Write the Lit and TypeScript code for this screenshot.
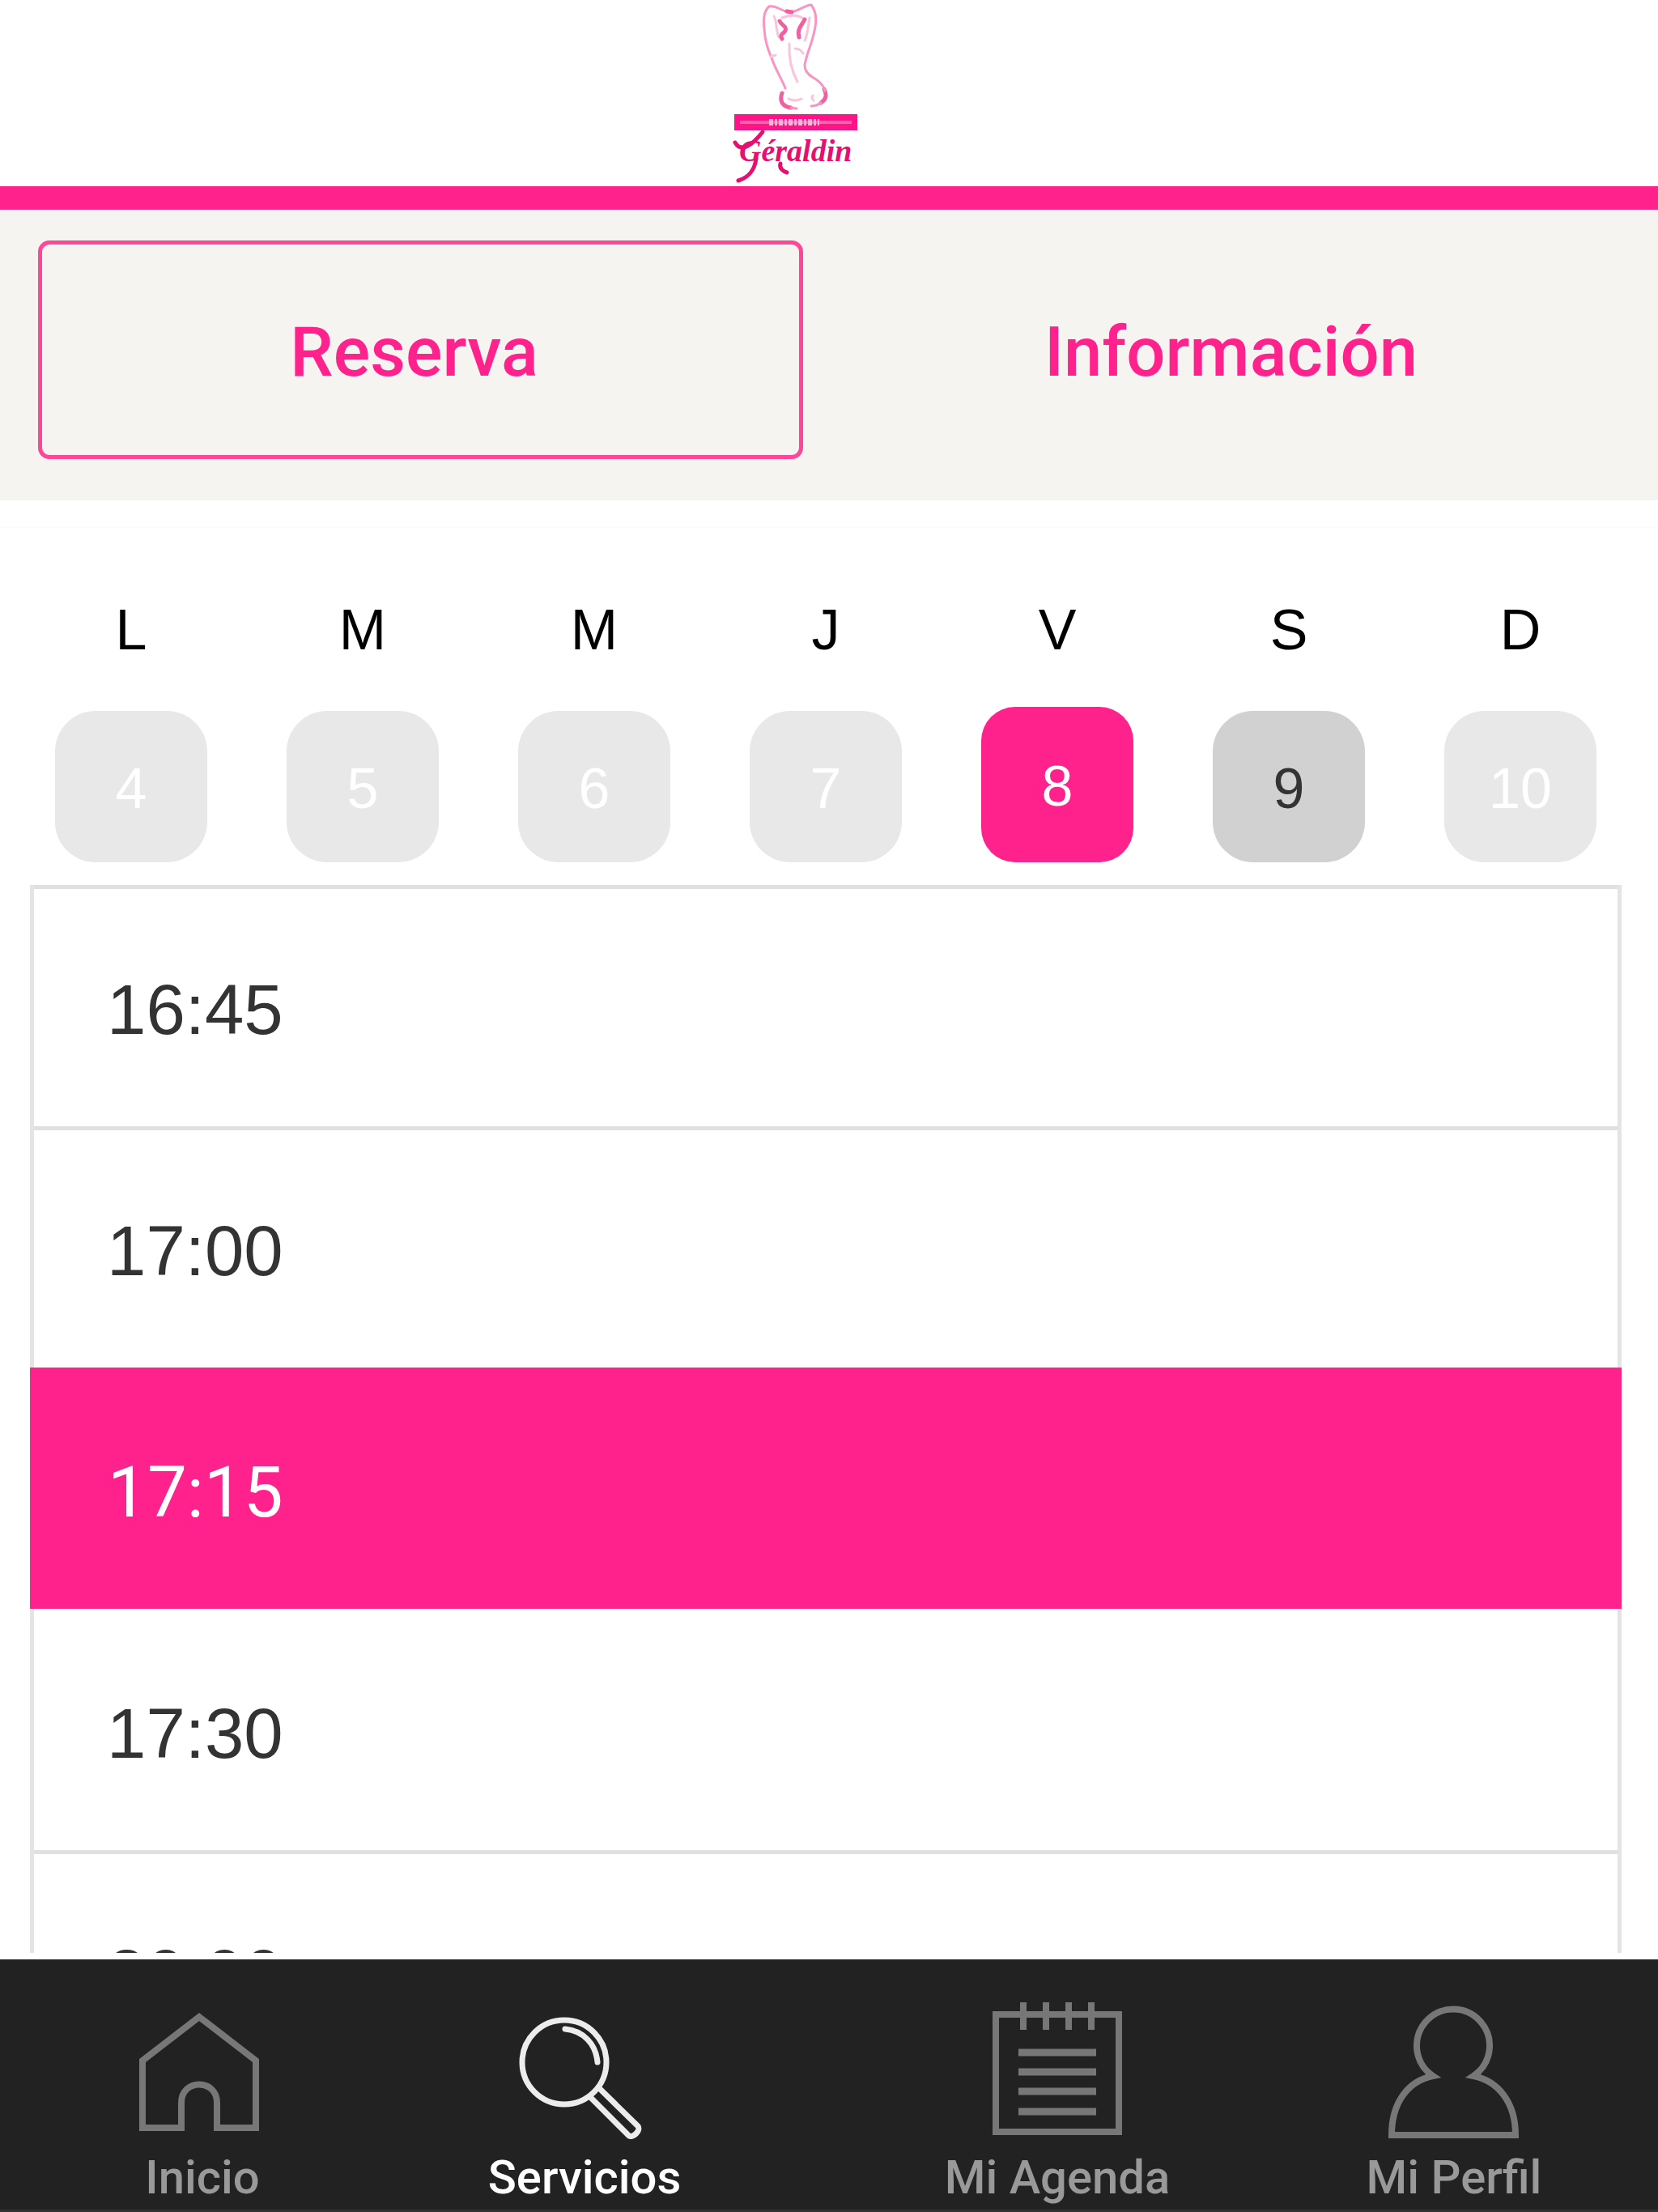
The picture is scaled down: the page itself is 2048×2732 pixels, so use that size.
import { LitElement, html, css, svg } from "lit";
import { customElement, state } from "lit/decorators.js";
import { classMap } from "lit/directives/class-map.js";

interface Day {
  letter: string;
  name: string;
  date: number;
  open: boolean;
}

const DAYS: Day[] = [
  { letter: "L", name: "Lunes", date: 4, open: false },
  { letter: "M", name: "Martes", date: 5, open: false },
  { letter: "M", name: "Miércoles", date: 6, open: false },
  { letter: "J", name: "Jueves", date: 7, open: false },
  { letter: "V", name: "Viernes", date: 8, open: true },
  { letter: "S", name: "Sábado", date: 9, open: true },
  { letter: "D", name: "Domingo", date: 10, open: false },
];

const TIMES = ["16:45", "17:00", "17:15", "17:30", "20:00"];

@customElement("brand-logo")
export class BrandLogo extends LitElement {
  static styles = css`
    :host {
      display: block;
    }
    .logo {
      display: block;
      width: 160px;
      height: 230px;
    }
    .line {
      fill: none;
      stroke: #f995c1;
      stroke-width: 3;
      stroke-linecap: round;
      stroke-linejoin: round;
    }
    .soft {
      stroke: #fcc4dc;
    }
    .strong {
      stroke: #f0609f;
      stroke-width: 5;
    }
    .script {
      font: italic 700 38px "Liberation Serif", serif;
      fill: #e5106f;
    }
    .flourish {
      fill: none;
      stroke: #e5106f;
      stroke-width: 5;
      stroke-linecap: round;
    }
  `;

  render() {
    return html`
      <svg class="logo" viewBox="0 0 160 230" role="img" aria-label="Géraldin">
        <path class="line" d="M50 8C43 14 43 24 44 36C45 52 49 62 54 74C58 86 66 98 70 109" />
        <path class="line" d="M50 8C58 6 64 13 74 15C84 16 94 6 102 6C108 14 109 26 106 38C103 54 97 64 94 80C94 86 97 91 102 94" />
        <path class="line soft" d="M56 20C60 26 58 38 62 46M100 22C98 32 98 42 94 50M66 22C76 18 86 18 94 24M75 54C74 72 78 88 85 101M82 60C88 60 90 63 92 66M52 70L58 68" />
        <path class="line strong" d="M63 26C66 32 72 32 70 38C68 42 62 42 66 48M94 24C90 32 84 36 87 46M72 14L78 15" />
        <path class="line strong" d="M66 115C62 126 68 132 77 133M118 110C122 118 120 123 114 127" />
        <path class="line" d="M100 93C108 98 116 102 119 112M77 133L84 134M114 127C110 130 106 131 102 131" />
        <path class="line soft" d="M74 122C80 125 86 124 90 122M104 118C102 120 103 122 105 124" />
        <rect x="7" y="141" width="152" height="20" fill="#ff1487" />
        <rect x="14" y="149" width="138" height="4" fill="#ff62ad" />
        <path d="M50 151H112" stroke="#ffb3d8" stroke-width="8" stroke-dasharray="5 2 3 2" />
        <path class="flourish" d="M8 176C16 190 30 178 42 163M34 196C32 212 22 220 12 223M64 202C62 208 68 212 72 213" />
        <text class="script" x="13" y="199">Géraldin</text>
      </svg>
    `;
  }
}

@customElement("app-root")
export class AppRoot extends LitElement {
  @state() private tab = "Reserva";
  @state() private day = 8;
  @state() private time = "17:15";
  @state() private section = "Servicios";

  static styles = css`
    :host {
      --pink: #ff218c;
      display: flex;
      flex-direction: column;
      height: 100vh;
      overflow: hidden;
      background: #fff;
      color: #333;
      font-family: "Liberation Sans", Arial, sans-serif;
    }
    * {
      box-sizing: border-box;
    }
    button {
      margin: 0;
      padding: 0;
      border: 0;
      background: none;
      color: inherit;
      font: inherit;
      cursor: pointer;
    }
    .header {
      display: flex;
      flex: none;
      justify-content: center;
      padding-right: 88px;
      border-bottom: 29px solid var(--pink);
    }
    .tabs {
      display: grid;
      flex: none;
      grid-template-columns: 1fr 1fr;
      gap: 64px;
      padding: 38px 47px 51px;
      background: #f5f4f0;
    }
    .tab {
      height: 270px;
      padding: 6px 16px 0 0;
      border: 5px solid transparent;
      border-radius: 14px;
      color: var(--pink);
      font: 500 85px/100px Roboto, sans-serif;
    }
    .tab.current {
      border-color: #ff4799;
    }
    .booking {
      display: flex;
      flex: 1;
      flex-direction: column;
      min-height: 0;
      margin-top: 32px;
      padding: 78px 45px 0 37px;
      border-top: 2px solid #fcfcfc;
      overflow: hidden;
    }
    .week {
      display: grid;
      flex: none;
      grid-template-columns: repeat(7, 1fr);
      margin: 0 -18px 28px;
    }
    .day {
      display: flex;
      flex-direction: column;
      align-items: center;
      color: #000;
      font-size: 70px;
      line-height: 96px;
    }
    .date {
      width: 188px;
      height: 187px;
      margin-top: 52px;
      padding-top: 4px;
      border-radius: 50px;
      background: #e8e8e8;
      color: #fff;
    }
    .date.open {
      background: #d1d1d1;
      color: #333;
    }
    .date.chosen {
      height: 192px;
      margin-top: 47px;
      border-radius: 42px;
      background: var(--pink);
      color: #fff;
    }
    .times {
      flex: none;
      margin: 0;
      padding: 0;
      border: solid #e4e4e4;
      border-width: 0 5px;
      list-style: none;
    }
    .slot {
      display: block;
      width: 100%;
      height: 298px;
      padding: 4px 90px 0;
      border-top: 5px solid #e0e0e0;
      font-size: 87px;
      line-height: 100px;
      text-align: left;
    }
    .slot.chosen {
      width: calc(100% + 10px);
      margin: 0 -5px;
      padding: 4px 96px 0;
      border-color: var(--pink);
      background: var(--pink);
      color: #fff;
      font-family: Roboto, sans-serif;
    }
    .slot.after {
      border-color: transparent;
    }
    .nav {
      display: grid;
      flex: none;
      grid-template-columns: 500fr 444fr 724fr 256fr;
      height: 312px;
      margin-top: 8px;
      padding: 44px 124px 0 0;
      border-bottom: 3px solid #333;
      background: #222;
    }
    .link {
      display: flex;
      flex-direction: column;
      align-items: center;
      color: #999;
      font: 500 58px/70px Roboto, sans-serif;
      text-decoration: none;
      white-space: nowrap;
    }
    .link.current {
      color: #fff;
    }
    .icon {
      width: 180px;
      height: 190px;
      fill: none;
      stroke: #777;
      stroke-width: 8;
    }
    .current .icon {
      stroke: #ececec;
      stroke-width: 7;
    }
  `;

  private icons: Record<string, unknown> = {
    Inicio: svg`<path d="M16 164V81L86 27L156 81V164H108V133C108 103 64 103 64 133V164Z" />`,
    Servicios: svg`
      <circle cx="65" cy="83" r="52" />
      <path d="M66 42C88 44 104 60 106 83" stroke-linecap="round" />
      <path d="M97 126L145 174C149 177 160 168 156 162L107 114" stroke-linejoin="round" />`,
    "Mi Agenda": svg`
      <path d="M14 24H166V169H14ZM48 9V43M76 9V43M104 9V43M132 9V43" />
      <path d="M42 71H138M42 95H138M42 119H138M42 144H138" stroke-width="9" />`,
    "Mi Perfil": svg`<path d="M64 100A45 45 0 1 1 114 100C144 106 166 132 166 173H13C13 132 34 106 64 100Z" />`,
  };

  render() {
    return html`
      <header class="header"><brand-logo></brand-logo></header>
      <div class="tabs" role="tablist">
        ${["Reserva", "Información"].map(
          (name) => html`<button
            class=${classMap({ tab: true, current: this.tab === name })}
            role="tab"
            aria-selected=${this.tab === name}
            @click=${() => (this.tab = name)}
          >${name}</button>`
        )}
      </div>
      <main class="booking">
        <div class="week">
          ${DAYS.map(
            (d) => html`<div class="day">
              <span>${d.letter}</span>
              <button
                class=${classMap({ date: true, open: d.open, chosen: this.day === d.date })}
                aria-label=${`${d.name} ${d.date}`}
                ?disabled=${!d.open}
                @click=${() => (this.day = d.date)}
              >${d.date}</button>
            </div>`
          )}
        </div>
        <ul class="times">
          ${TIMES.map(
            (t, i) => html`<li>
              <button
                class=${classMap({
                  slot: true,
                  chosen: this.time === t,
                  after: i > 0 && this.time === TIMES[i - 1],
                })}
                aria-pressed=${this.time === t}
                @click=${() => (this.time = t)}
              >${t}</button>
            </li>`
          )}
        </ul>
      </main>
      <nav class="nav">
        ${Object.keys(this.icons).map(
          (name) => html`<a
            class=${classMap({ link: true, current: this.section === name })}
            href="#"
            @click=${(e: Event) => {
              e.preventDefault();
              this.section = name;
            }}
          >
            <svg class="icon" viewBox="0 0 180 190" aria-hidden="true">${this.icons[name]}</svg>
            <span>${name}</span>
          </a>`
        )}
      </nav>
    `;
  }
}
